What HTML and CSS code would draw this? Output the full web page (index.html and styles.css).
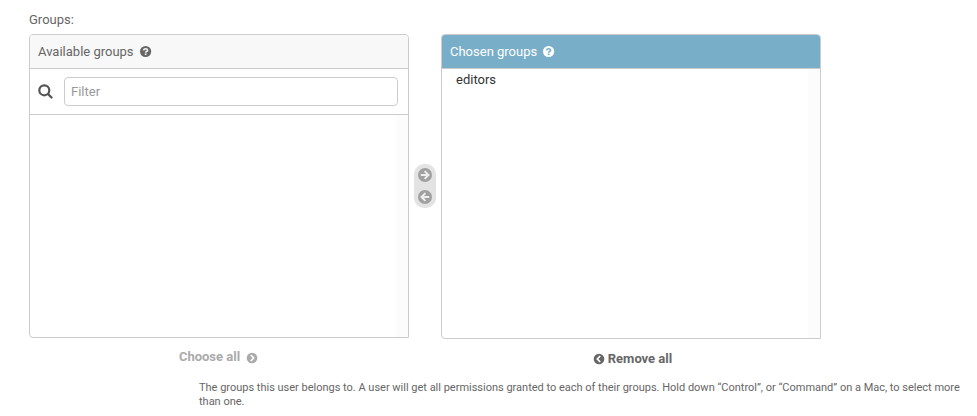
FILE: index.html
```
<!DOCTYPE html>
<html lang="en">
<head>
<meta charset="utf-8">
<title>Groups</title>
<link rel="stylesheet" href="styles.css">
</head>
<body>
<main class="field">
  <label class="field-label">Groups:</label>
  <div class="selector">
    <section class="column">
      <div class="panel available">
        <h2 class="title">Available groups
          <svg class="help" viewBox="0 0 12 12"><circle cx="5.6" cy="5.5" r="5.6" fill="#666"/><path d="M3.6 4.3Q3.9 2.7 5.6 2.7T7.6 4.2Q7.6 5 6.6 5.5Q5.7 5.9 5.7 6.7" fill="none" stroke="#f8f8f8" stroke-width="1.6"/><path d="M4.8 7.5h1.7v1.6H4.8z" fill="#f8f8f8"/></svg>
        </h2>
        <div class="filter">
          <svg class="search" viewBox="0 0 15 15"><circle cx="6.3" cy="6.3" r="5" fill="none" stroke="#555" stroke-width="2.2"/><path d="M10 10l3.5 3.5" stroke="#555" stroke-width="2.4" stroke-linecap="round"/></svg>
          <input class="filter-input" type="text" placeholder="Filter">
        </div>
        <div class="list"></div>
      </div>
      <a class="action choose">Choose all
        <svg class="round" viewBox="0 0 12 12"><circle cx="6" cy="6" r="5.3" fill="#aaa"/><path d="M4.8 3L7.7 6L4.8 9" fill="none" stroke="#fff" stroke-width="1.7"/></svg>
      </a>
    </section>
    <div class="chooser">
      <svg class="arrow" viewBox="0 0 14 14"><circle cx="7" cy="7" r="7" fill="#a0a0a0"/><path d="M2.8 7h7.4M6.6 3.1L10.5 7L6.6 10.9" fill="none" stroke="#eee" stroke-width="2"/></svg>
      <svg class="arrow" viewBox="0 0 14 14"><circle cx="7" cy="7" r="7" fill="#a0a0a0"/><path d="M11.2 7H3.8M7.4 3.1L3.5 7L7.4 10.9" fill="none" stroke="#eee" stroke-width="2"/></svg>
    </div>
    <section class="column">
      <div class="panel chosen">
        <h2 class="title">Chosen groups
          <svg class="help" viewBox="0 0 12 12"><circle cx="5.6" cy="5.5" r="5.6" fill="#fff"/><path d="M3.6 4.3Q3.9 2.7 5.6 2.7T7.6 4.2Q7.6 5 6.6 5.5Q5.7 5.9 5.7 6.7" fill="none" stroke="#79aec8" stroke-width="1.6"/><path d="M4.8 7.5h1.7v1.6H4.8z" fill="#79aec8"/></svg>
        </h2>
        <div class="list"><div class="option">editors</div></div>
      </div>
      <a class="action remove">
        <svg class="round" viewBox="0 0 12 12"><circle cx="6" cy="6" r="5.3" fill="#666"/><path d="M7.2 3L4.3 6L7.2 9" fill="none" stroke="#fff" stroke-width="1.7"/></svg>
        Remove all
      </a>
    </section>
  </div>
  <p class="hint">The groups this user belongs to. A user will get all permissions granted to each of their groups. Hold down “Control”, or “Command” on a Mac, to select more than one.</p>
</main>
</body>
</html>
```
FILE: styles.css
```
* { box-sizing: border-box; }
body {
  margin: 0;
  background: #fff;
  color: #666;
  font: 13px/16px Roboto, sans-serif;
}
svg { display: block; flex: none; overflow: visible; }
.field { padding: 12px 16px 0 29px; }
.field-label { display: block; height: 22px; }
.selector { display: flex; height: 335px; }
.column { width: 380px; }
.panel {
  display: flex;
  flex-direction: column;
  border: 1px solid #ccc;
  border-radius: 4px 4px 0 4px;
  overflow: hidden;
}
.available { height: 304px; }
.chosen { height: 305px; }
.title {
  display: flex;
  align-items: center;
  gap: 6px;
  height: 34px;
  flex: none;
  margin: 0;
  padding: 0 8px;
  border-bottom: 1px solid #ccc;
  background: #f8f8f8;
  font-size: 13px;
  font-weight: 400;
}
.chosen .title { background: #79aec8; color: #fff; }
.help { width: 12px; height: 12px; }
.filter {
  display: flex;
  align-items: center;
  gap: 11px;
  flex: none;
  height: 46px;
  padding: 0 10px 0 8px;
  border-bottom: 1px solid #ccc;
}
.search { width: 15px; height: 15px; }
.filter-input {
  flex: 1;
  height: 29px;
  padding: 5px 6px;
  border: 1px solid #ccc;
  border-radius: 4px;
  font: 13px Roboto, sans-serif;
}
.filter-input::placeholder { color: #999; }
.list {
  flex: 1;
  padding: 3px 14px;
  background: linear-gradient(#fcfcfc, #fcfcfc) right / 12px 100% no-repeat;
  color: #333;
}
.action {
  display: flex;
  align-items: center;
  justify-content: center;
  height: 16px;
  font-weight: 700;
}
.choose { margin-top: 11px; gap: 6px; padding-right: 1px; color: #aaa; }
.remove { margin-top: 12px; gap: 3px; padding-left: 3px; }
.round { width: 12px; height: 12px; }
.choose .round { margin-top: 2px; }
.chooser {
  display: flex;
  flex-direction: column;
  align-items: center;
  gap: 8px;
  width: 22px;
  height: 44px;
  margin: 130px 5px 0;
  padding-top: 4px;
  border-radius: 10px;
  background: #e3e3e3;
}
.arrow { width: 14px; height: 14px; }
.hint {
  margin: 12px 0 0 170px;
  font-size: 11px;
  line-height: 14px;
  letter-spacing: -0.007px;
}
```
